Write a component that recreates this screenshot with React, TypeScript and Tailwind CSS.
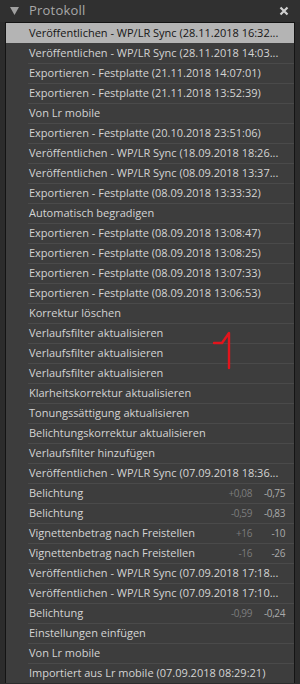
import React from 'react';

type Row = { label: string; a?: string; b?: string };

const rows: Row[] = [
    { label: 'Veröffentlichen - WP/LR Sync (28.11.2018 16:32...' },
    { label: 'Veröffentlichen - WP/LR Sync (28.11.2018 14:03...' },
    { label: 'Exportieren - Festplatte (21.11.2018 14:07:01)' },
    { label: 'Exportieren - Festplatte (21.11.2018 13:52:39)' },
    { label: 'Von Lr mobile' },
    { label: 'Exportieren - Festplatte (20.10.2018 23:51:06)' },
    { label: 'Veröffentlichen - WP/LR Sync (18.09.2018 18:26...' },
    { label: 'Veröffentlichen - WP/LR Sync (08.09.2018 13:37...' },
    { label: 'Exportieren - Festplatte (08.09.2018 13:33:32)' },
    { label: 'Automatisch begradigen' },
    { label: 'Exportieren - Festplatte (08.09.2018 13:08:47)' },
    { label: 'Exportieren - Festplatte (08.09.2018 13:08:25)' },
    { label: 'Exportieren - Festplatte (08.09.2018 13:07:33)' },
    { label: 'Exportieren - Festplatte (08.09.2018 13:06:53)' },
    { label: 'Korrektur löschen' },
    { label: 'Verlaufsfilter aktualisieren' },
    { label: 'Verlaufsfilter aktualisieren' },
    { label: 'Verlaufsfilter aktualisieren' },
    { label: 'Klarheitskorrektur aktualisieren' },
    { label: 'Tonungssättigung aktualisieren' },
    { label: 'Belichtungskorrektur aktualisieren' },
    { label: 'Verlaufsfilter hinzufügen' },
    { label: 'Veröffentlichen - WP/LR Sync (07.09.2018 18:36...' },
    { label: 'Belichtung', a: '+0,08', b: '-0,75' },
    { label: 'Belichtung', a: '-0,59', b: '-0,83' },
    { label: 'Vignettenbetrag nach Freistellen', a: '+16', b: '-10' },
    { label: 'Vignettenbetrag nach Freistellen', a: '-16', b: '-26' },
    { label: 'Veröffentlichen - WP/LR Sync (07.09.2018 17:18...' },
    { label: 'Veröffentlichen - WP/LR Sync (07.09.2018 17:10...' },
    { label: 'Belichtung', a: '-0,99', b: '-0,24' },
    { label: 'Einstellungen einfügen' },
    { label: 'Von Lr mobile' },
    { label: 'Importiert aus Lr mobile (07.09.2018 08:29:21)' },
];

export default function App() {
    return (
        <div className="relative w-[300px] h-[684px] overflow-hidden bg-[#2c2c2c] font-['Open_Sans',sans-serif]">
            {/* Header */}
            <div className="flex h-[22px] items-center bg-[#303030] px-[10px]">
                <svg width="9" height="8" viewBox="0 0 9 8" className="mr-[10px]">
                    <path d="M0 0 L9 0 L4.5 8 Z" fill="#a0a0a0" />
                </svg>
                <span className="text-[13px] text-[#a9a9a9] tracking-[0.2px]">Protokoll</span>
                <div className="flex-1" />
                <svg width="10" height="10" viewBox="0 0 10 10" className="mr-[1px]">
                    <path d="M1.5 1.5 L8.5 8.5 M8.5 1.5 L1.5 8.5" stroke="#cfcfcf" strokeWidth="2.2" />
                </svg>
            </div>

            {/* List */}
            <div className="ml-[5px] mr-[5px] border-l border-r border-t border-[#141414] bg-[#3d3d3d]">
                {rows.map((row, i) => {
                    const selected = i === 0;
                    return (
                        <div
                            key={i}
                            className={`relative flex h-[20px] items-center whitespace-nowrap pl-[23px] pr-[4px] text-[11px] ${selected ? 'bg-[#b4b4b4] text-[#141414]' : 'text-[#d4d4d4]'
                                }`}
                        >
                            {!selected && i !== 1 && (
                                <div className="absolute left-[22px] right-0 top-0 h-px bg-[#4a4a4a]" />
                            )}
                            <span className="flex-1">{row.label}</span>
                            {row.a && (
                                <span className="flex pr-[5px] text-[10px] tracking-[-0.4px]">
                                    <span className="w-[40px] text-right text-[#7c7c7c]">{row.a}</span>
                                    <span className="w-[33px] text-right text-[#aaaaaa]">{row.b}</span>
                                </span>
                            )}
                        </div>
                    );
                })}
            </div>

            {/* red mark */}
            <svg className="absolute left-[210px] top-[330px]" width="26" height="42" viewBox="0 0 26 42">
                <path d="M4 13 L12 13 L19 3 L19 38" fill="none" stroke="#e3141c" strokeWidth="2.4" strokeLinecap="round" strokeLinejoin="round" />
            </svg>
        </div>
    );
}
